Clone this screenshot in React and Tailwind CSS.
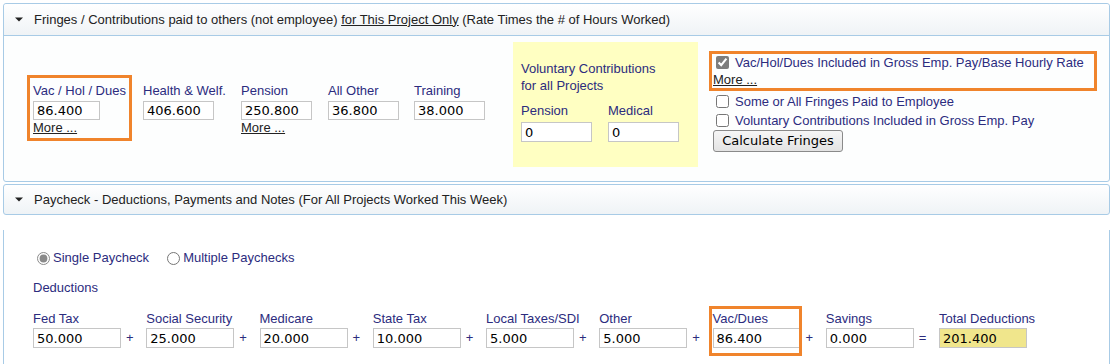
import { useState } from 'react'

const DEDUCTIONS = [
  { label: 'Fed Tax', value: '50.000' },
  { label: 'Social Security', value: '25.000' },
  { label: 'Medicare', value: '20.000' },
  { label: 'State Tax', value: '10.000' },
  { label: 'Local Taxes/SDI', value: '5.000' },
  { label: 'Other', value: '5.000' },
  { label: 'Vac/Dues', value: '86.400', highlight: true },
  { label: 'Savings', value: '0.000' },
]

function Caret() {
  return (
    <svg width="8" height="5" viewBox="0 0 8 5" className="shrink-0">
      <path d="M0 0.5 L8 0.5 L4 4.5 Z" fill="#222" />
    </svg>
  )
}

function Field({ value, className = '' }) {
  return (
    <input
      readOnly
      value={value}
      className={`border border-[#c6c6c6] pl-[3px] text-[13px] text-black font-['DejaVu_Sans',sans-serif] outline-none ${className}`}
    />
  )
}

function More() {
  return <a className="leading-[16px] underline text-[#222] cursor-pointer whitespace-nowrap">More ...</a>
}

function Fringe({ label, value, more, className = '' }) {
  return (
    <div className={`flex flex-col w-[71px] mt-[33px] pt-[8px] ${className}`}>
      <span className="leading-[16px] whitespace-nowrap">{label}</span>
      <Field value={value} className="mt-[2px] w-[71px] h-[19px] bg-white" />
      {more && <More />}
    </div>
  )
}

function PanelHeader({ children, className = '' }) {
  return (
    <div className={`flex items-center gap-[11px] pl-[11px] bg-gradient-to-b from-white to-[#eff3f6] text-[#222] ${className}`}>
      <Caret />
      <span className="whitespace-nowrap">{children}</span>
    </div>
  )
}

export default function App() {
  const [paycheck, setPaycheck] = useState('single')

  return (
    <div className="min-h-[364px] bg-white pt-[3px] pl-[3px] text-[13px] text-[#2c2c7e] font-['Liberation_Sans',Arial,sans-serif] overflow-hidden">
      <div className="w-[1107px]">
        {/* Fringes panel */}
        <div className="border border-[#a8cbe6] rounded-[3px] bg-[#fdfefe]">
          <PanelHeader className="h-[32px] border-b border-[#a8cbe6] rounded-t-[3px]">
            Fringes / Contributions paid to others (not employee){' '}
            <span className="underline">for This Project Only</span> (Rate Times the # of Hours Worked)
          </PanelHeader>

          <div className="flex items-start pl-[23px] pt-[6px] pb-[14px]">
            <div className="flex flex-col mt-[33px] w-[105px] h-[66px] border-[3px] border-[#f0842c] pl-[3px] pt-[5px]">
              <span className="leading-[16px] whitespace-nowrap">Vac / Hol / Dues</span>
              <Field value="86.400" className="mt-[2px] w-[67px] h-[19px] bg-white" />
              <More />
            </div>
            <Fringe label="Health & Welf." value="406.600" className="ml-[11px]" />
            <Fringe label="Pension" value="250.800" more className="ml-[27px]" />
            <Fringe label="All Other" value="36.800" className="ml-[16px]" />
            <Fringe label="Training" value="38.000" className="ml-[15px]" />

            <div className="ml-[28px] w-[185px] h-[125px] bg-[#ffffc2] pl-[8px] pt-[18px]">
              <p className="leading-[17px]">Voluntary Contributions</p>
              <p className="leading-[17px]">for all Projects</p>
              <div className="flex gap-[16px] mt-[9px]">
                <div className="flex flex-col">
                  <span className="leading-[16px]">Pension</span>
                  <Field value="0" className="mt-[3px] w-[71px] h-[20px] bg-white" />
                </div>
                <div className="flex flex-col">
                  <span className="leading-[16px]">Medical</span>
                  <Field value="0" className="mt-[3px] w-[71px] h-[20px] bg-white" />
                </div>
              </div>
            </div>

            <div className="ml-[11px] mt-[9px] flex flex-col">
              <div className="flex flex-col w-[388px] h-[40px] border-[3px] border-[#f0842c]">
                <label className="flex items-center leading-[17px]">
                  <input type="checkbox" checked readOnly className="ml-[4px] w-[13px] h-[13px] accent-[#7d7d7d]" />
                  <span className="ml-[6px] whitespace-nowrap">Vac/Hol/Dues Included in Gross Emp. Pay/Base Hourly Rate</span>
                </label>
                <span className="pl-[1px] leading-[17px]"><More /></span>
              </div>
              <label className="flex items-center leading-[19px] mt-[1px]">
                <input type="checkbox" className="ml-[7px] w-[13px] h-[13px]" />
                <span className="ml-[6px]">Some or All Fringes Paid to Employee</span>
              </label>
              <label className="flex items-center leading-[19px]">
                <input type="checkbox" className="ml-[7px] w-[13px] h-[13px]" />
                <span className="ml-[6px]">Voluntary Contributions Included in Gross Emp. Pay</span>
              </label>
              <button className="self-start ml-[4px] h-[22px] w-[130px] border border-[#8a8a8a] rounded-[3px] bg-gradient-to-b from-[#f6f6f6] to-[#e3e3e3] text-[13px] text-black font-['DejaVu_Sans',sans-serif]">
                Calculate Fringes
              </button>
            </div>
          </div>
        </div>

        {/* Paycheck panel */}
        <PanelHeader className="mt-[2px] h-[31px] border border-[#a8cbe6] rounded-[3px]">
          Paycheck - Deductions, Payments and Notes (For All Projects Worked This Week)
        </PanelHeader>

        <div className="mt-[15px] h-[140px] border-x border-[#a8cbe6] pl-[29px] pt-[20px]">
          <div className="flex items-center leading-[16px]">
            <label className="flex items-center">
              <input
                type="radio"
                name="paycheck"
                checked={paycheck === 'single'}
                onChange={() => setPaycheck('single')}
                className="ml-[4px] w-[13px] h-[13px] accent-[#8a8a8a]"
              />
              <span className="ml-[3px]">Single Paycheck</span>
            </label>
            <label className="flex items-center ml-[18px]">
              <input
                type="radio"
                name="paycheck"
                checked={paycheck === 'multiple'}
                onChange={() => setPaycheck('multiple')}
                className="w-[13px] h-[13px] accent-[#8a8a8a]"
              />
              <span className="ml-[3px]">Multiple Paychecks</span>
            </label>
          </div>

          <p className="mt-[14px] leading-[16px]">Deductions</p>

          <div className="flex items-end mt-[15px]">
            {DEDUCTIONS.map(d => (
              <div key={d.label} className="flex items-end">
                <div className="relative flex flex-col w-[88px]">
                  <span className="leading-[16px] whitespace-nowrap">{d.label}</span>
                  <Field value={d.value} className="mt-[1px] w-[88px] h-[20px] bg-white" />
                  {d.highlight && (
                    <span className="absolute -left-[4px] -right-[1px] -top-[5px] -bottom-[8px] border-[3px] border-[#f0842c] pointer-events-none" />
                  )}
                </div>
                <span className="w-[25.25px] pl-[5px] h-[20px] leading-[20px]">
                  {d.label === 'Savings' ? '=' : '+'}
                </span>
              </div>
            ))}
            <div className="flex flex-col w-[88px]">
              <span className="leading-[16px] whitespace-nowrap">Total Deductions</span>
              <Field value="201.400" className="mt-[1px] w-[88px] h-[20px] bg-[#f0e68c]" />
            </div>
          </div>
        </div>
      </div>
    </div>
  )
}
